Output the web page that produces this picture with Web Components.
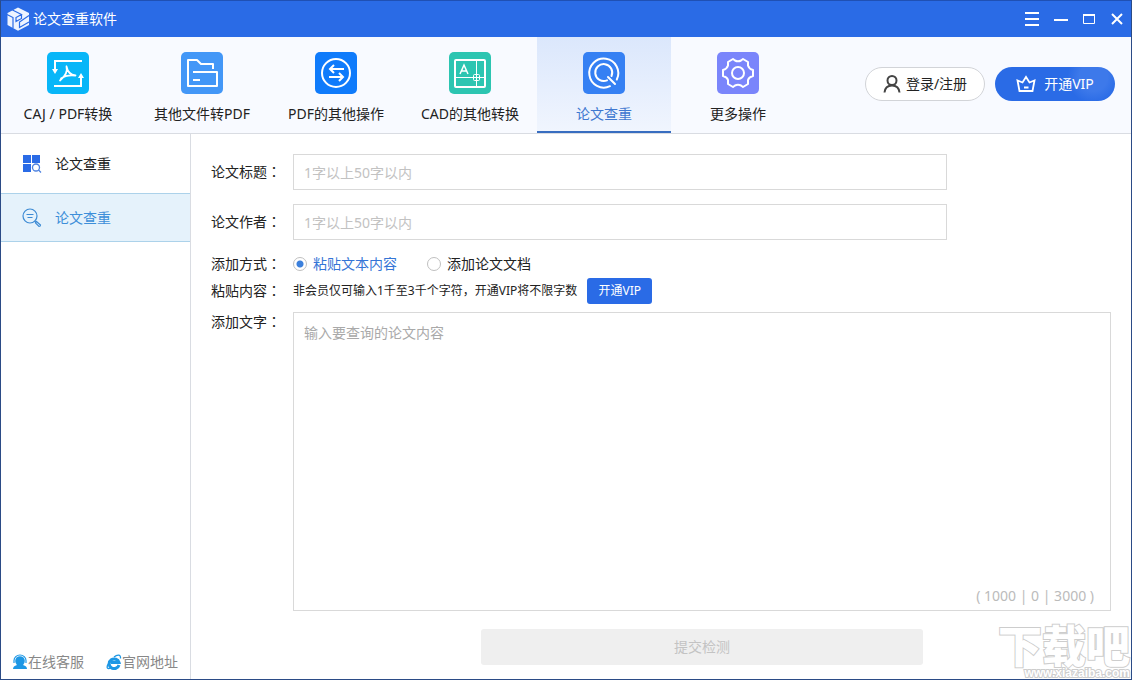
<!DOCTYPE html>
<html lang="zh-CN">
<head>
<meta charset="utf-8">
<title>论文查重软件</title>
<style>
  body { margin: 0; font: 14px/20px "Noto Sans", "Noto Sans CJK SC", sans-serif; color: #222; background: #fff; }
</style>
</head>
<body>
<app-window>
  <title-bar slot="title" caption="论文查重软件"></title-bar>
  <tool-bar slot="tools">
    <tool-tab icon="convert">CAJ / PDF转换</tool-tab>
    <tool-tab icon="folder">其他文件转PDF</tool-tab>
    <tool-tab icon="swap">PDF的其他操作</tool-tab>
    <tool-tab icon="cad">CAD的其他转换</tool-tab>
    <tool-tab icon="check" active>论文查重</tool-tab>
    <tool-tab icon="gear">更多操作</tool-tab>
    <pill-button slot="account" icon="user">登录/注册</pill-button>
    <pill-button slot="account" icon="crown" primary>开通VIP</pill-button>
  </tool-bar>
  <side-nav slot="side">
    <side-item icon="grid">论文查重</side-item>
    <side-item icon="search" active>论文查重</side-item>
    <side-link slot="foot" icon="service">在线客服</side-link>
    <side-link slot="foot" icon="globe">官网地址</side-link>
  </side-nav>
  <paper-form></paper-form>
  <site-mark slot="mark"></site-mark>
</app-window>

<script>
const ICONS = {
  logo: [24, 24, `<path d="M12 0.500L23 6v12L12 23.800 1.500 18V6z" fill="#edf4ff"/><path d="M1 7.500l6 3v10.500M6.500 3l9 4.500L10 10.500v4l5.500-3V7.500M23 8.500L13.500 15v5.500L23 15" fill="none" stroke="#2a6be6" stroke-width="1.200"/>`],
  convert: [42, 42, `<rect width="42" height="42" rx="5" fill="#08b6f8"/><g fill="none" stroke="#fff" stroke-width="2"><path d="M35 9H8v9M7 34h27V24"/></g><path d="M5 17h6l-3 5zM31 26h6l-3-5z" fill="#fff"/><path d="M19.500 14.500q2 7-6.500 14M19.500 14.500q1.500 8 9 9M14 26.500q5-4 14.500-3" fill="none" stroke="#fff" stroke-width="1.800" stroke-linecap="round"/>`],
  folder: [42, 42, `<rect width="42" height="42" rx="5" fill="#4397f7"/><path d="M32 17v-5H20l-4-4H7v26h29V20H12M12 28h7" fill="none" stroke="#fff" stroke-width="2" stroke-linejoin="round"/>`],
  swap: [42, 42, `<rect width="42" height="42" rx="5" fill="#0f7bfb"/><circle cx="21" cy="21" r="14" fill="none" stroke="#fff" stroke-width="2"/><path d="M29 17H15M19 13l-4 4 4 4M14 25h14M24 21l4 4-4 4" fill="none" stroke="#fff" stroke-width="2"/>`],
  cad: [42, 42, `<rect width="42" height="42" rx="5" fill="#2cc5b1"/><g fill="none" stroke="#fff"><rect x="6" y="8" width="30" height="27" rx="1" stroke-width="2"/><path d="M6 25.500h30M27.500 8v27"/><rect x="24.500" y="22.500" width="6" height="6" rx="1"/><path d="M11 22l4-9 4 9M12.500 19h5" stroke-width="1.500"/></g>`],
  check: [42, 42, `<rect width="42" height="42" rx="5" fill="#3580f3"/><g fill="none" stroke="#fff" stroke-width="2" stroke-linecap="round"><path d="M27 34.200A14.500 14.500 0 1 1 33.800 27.500"/><path d="M24 28.400A8.500 8.500 0 1 1 28.500 24M25 25l7 7"/></g>`],
  gear: [42, 42, `<rect width="42" height="42" rx="5" fill="#7a85fb"/><g fill="none" stroke="#fff" stroke-width="2" stroke-linejoin="round"><path d="M16 7l2 1.500q3 1.500 6 0L26 7l5 3v3.500q1 3.500 5 4.500v6q-4 1-5 4v4l-5 3-2-1.500q-3-1.500-6 0L16 35l-5-3v-4q-1-3-5-4v-6q4-1 5-4.500V10z"/><circle cx="21" cy="21" r="6"/></g>`],
  user: [18, 18, `<g fill="none" stroke="#444" stroke-width="2"><circle cx="9" cy="5.500" r="4.500"/><path d="M1.500 17.500C2 12.500 5 10.500 9 10.500s7 2 7.500 7"/></g>`],
  crown: [20, 18, `<path d="M3.500 16L1.500 5.500 6.500 7.500 10 2l3.500 5.500 5-2L16.500 16zM8 12.500h4.500" fill="none" stroke="#fff" stroke-width="1.800"/>`],
  grid: [20, 20, `<path d="M1 1h8v8H1zM10 1h8v8h-8zM1 10h8v8H1z" fill="#2a6be6"/><g fill="none" stroke="#4b80df" stroke-width="1.300"><circle cx="14" cy="13.500" r="3.500"/><path d="M16.500 16l2.500 2.500"/></g>`],
  search: [20, 20, `<g fill="none" stroke="#3d8bd4" stroke-width="1.200"><circle cx="8" cy="8" r="7"/><path d="M4.500 6.500h7M5.500 9.500h5M12.500 13l1.500 1.500M14.500 13.500l4 3.500q0 1.500-1.500 1.500l-3.500-3.500z"/></g>`],
  service: [16, 16, `<path d="M1 15q0-3 4-4h6q4 1 4 4z" fill="#1d97e5"/><circle cx="8" cy="7" r="4.800" fill="#1d97e5"/><path d="M2 9V6.500a6 5.500 0 0 1 12 0V9" fill="none" stroke="#1d97e5" stroke-width="1.200"/>`],
  globe: [16, 16, `<path d="M13 11A5 4.800 0 1 1 13 8.500H5" fill="none" stroke="#1d97e5" stroke-width="3"/><path d="M3 9C.5 12 .5 15 3 14.500c1 0 2-.5 3-1M8 3c3-2.500 7-3 6.500 1.500" fill="none" stroke="#1d97e5" stroke-width="1.300"/>`],
  menu: [16, 16, `<path d="M0 2h14M0 8h14M0 14h14" stroke="#fff" stroke-width="2"/>`],
  min: [16, 16, `<path d="M1 9h14" stroke="#fff" stroke-width="2"/>`],
  max: [16, 16, `<path d="M2.500 4v8.500h11V4" fill="none" stroke="#fff"/><path d="M2 4h12" stroke="#fff" stroke-width="2"/>`],
  close: [16, 16, `<path d="M3 3l10 10M13 3L3 13" stroke="#fff" stroke-width="2"/>`]
};
const icon = name => {
  const [w, h, body] = ICONS[name];
  return `<svg width="${w}" height="${h}" viewBox="0 0 ${w} ${h}" aria-hidden="true">${body}</svg>`;
};
const BASE = `*{box-sizing:border-box} svg{display:block;flex:none} button,input,textarea{font:inherit;color:inherit;margin:0}
  .colon{font-family:"Noto Sans CJK TC",sans-serif;line-height:1px}`;

function define(name, render) {
  customElements.define(name, class extends HTMLElement {
    connectedCallback() {
      if (this.shadowRoot) return;
      this.attachShadow({ mode: "open" });
      const { css, html } = render(this);
      this.shadowRoot.innerHTML = `<style>${BASE}${css}</style>${html}`;
    }
  });
}

define("app-window", () => ({
  css: `
    :host{display:flex;flex-direction:column;min-height:100vh;box-sizing:border-box;border:1px solid #2b4b86;border-top-color:#1f50b4;position:relative}
    .body{flex:1;display:flex}
    main{flex:1;display:flex;min-width:0}`,
  html: `<slot name="title"></slot><slot name="tools"></slot>
    <div class="body"><slot name="side"></slot><main><slot></slot></main></div><slot name="mark"></slot>`
}));

define("title-bar", el => ({
  css: `
    :host{display:flex;align-items:center;height:36px;background:#2a6be6;color:#fff;padding-left:5px}
    h1{font:inherit;margin:0 auto 0 3px}
    button{display:grid;place-items:center;width:28px;height:36px;padding:0;border:0;background:none}`,
  html: `${icon("logo")}<h1>${el.getAttribute("caption")}</h1>
    <button aria-label="菜单">${icon("menu")}</button><button aria-label="最小化">${icon("min")}</button>
    <button aria-label="最大化">${icon("max")}</button><button aria-label="关闭">${icon("close")}</button>`
}));

define("tool-bar", () => ({
  css: `
    :host{display:flex;background:#f8faff;border-bottom:1px solid #d9dce2}
    nav{display:flex}
    .account{display:flex;align-items:center;gap:10px;margin-left:auto;padding:0 16px 2px 0}`,
  html: `<nav><slot></slot></nav><div class="account"><slot name="account"></slot></div>`
}));

define("tool-tab", el => ({
  css: `
    :host{display:block;width:134px}
    button{display:flex;flex-direction:column;align-items:center;gap:10px;width:100%;height:96px;padding:15px 0 0;border:0;border-bottom:2px solid transparent;background:none;white-space:nowrap}
    :host([active]) button{background:linear-gradient(#dbe7fc,#f0f5fe);border-color:#386dc0;color:#3f78d0}`,
  html: `<button>${icon(el.getAttribute("icon"))}<slot></slot></button>`
}));

define("pill-button", el => ({
  css: `
    :host{display:block}
    button{display:flex;align-items:center;justify-content:center;gap:5px;width:120px;height:34px;padding:0;border:1px solid #d2d4d8;border-radius:17px;background:#fff;white-space:nowrap}
    :host([primary]) button{gap:8px;border:0;color:#fff;background:radial-gradient(circle at 82% 30%,#3d79ea 0 14px,#2a6be6 26px)}`,
  html: `<button>${icon(el.getAttribute("icon"))}<slot></slot></button>`
}));

define("side-nav", () => ({
  css: `
    :host{display:flex;flex-direction:column;width:190px;box-sizing:border-box;border-right:1px solid #d9dce2;flex:none}
    footer{display:flex;gap:22px;margin-top:auto;padding:0 10px 7px 11px}`,
  html: `<nav><slot></slot></nav><footer><slot name="foot"></slot></footer>`
}));

define("side-item", el => ({
  css: `
    :host{display:block}
    button{display:flex;align-items:center;gap:13px;width:100%;height:59px;padding:0 0 0 21px;border:0;background:none}
    :host([active]) button{height:49px;border:solid #acd2ea;border-width:1px 0;background:#e5f2fb;color:#3d8fd9}`,
  html: `<button>${icon(el.getAttribute("icon"))}<slot></slot></button>`
}));

define("side-link", el => ({
  css: `
    :host{display:block}
    a{display:flex;align-items:center;color:#888;text-decoration:none;white-space:nowrap}`,
  html: `<a href="#">${icon(el.getAttribute("icon"))}<slot></slot></a>`
}));

const caption = text => `${text}<span class="colon" lang="zh-Hant">：</span>`;

define("text-field", el => ({
  css: `
    :host{display:flex;align-items:center}
    label{width:82px;flex:none}
    .box{flex:1}
    input{display:block;width:80%;height:36px;padding:0 10px;border:1px solid #d9d9d9;outline:0;background:#fff}
    input::placeholder{color:#c2c2c2}`,
  html: `<label for="field">${caption(el.getAttribute("label"))}</label>
    <div class="box"><input id="field" type="text" placeholder="${el.getAttribute("placeholder")}"></div>`
}));

define("mode-choice", () => ({
  css: `
    :host{display:flex;align-items:center}
    .name{width:82px;flex:none}
    .set{display:flex;gap:30px}
    label{display:flex;align-items:center;gap:6px}
    input{appearance:none;width:14px;height:14px;border:1px solid #c0c0c0;border-radius:50%;background:#fff}
    input:checked{background:radial-gradient(circle,#3c80dc 0 3px,#fff 4px)}
    label:has(:checked){color:#3575d6}`,
  html: `<span class="name" id="name">${caption("添加方式")}</span>
    <div class="set" role="radiogroup" aria-labelledby="name">
      <label><input type="radio" name="mode" checked>粘贴文本内容</label>
      <label><input type="radio" name="mode">添加论文文档</label>
    </div>`
}));

define("paper-form", () => ({
  css: `
    :host{flex:1;display:flex;min-width:0}
    form{flex:1;display:flex;flex-direction:column;padding:20px 20px 14px;min-width:0}
    text-field{margin-bottom:14px}
    mode-choice{margin-bottom:4px}
    .name{width:82px;flex:none}
    .note{display:flex;align-items:center;margin-bottom:8px}
    .note p{margin:0 10px 0 0;font-size:12px}
    .vip{width:65px;height:26px;padding:0;border:0;border-radius:3px;background:#2a6be6;color:#fff;font-size:12px}
    .content{flex:1;display:flex}
    .area{flex:1;display:flex;position:relative}
    textarea{flex:1;min-height:200px;padding:10px;border:1px solid #d9d9d9;outline:0;resize:none;background:#fff}
    textarea::placeholder{color:#a9a9a9}
    output{position:absolute;right:17px;bottom:5px;color:#bbb}
    .foot{display:grid;padding-left:82px}
    .send{justify-self:center;width:54%;height:36px;margin-top:18px;padding:0;border:0;border-radius:3px;background:#efefef;color:#c3c3c3}`,
  html: `<form>
      <text-field label="论文标题" placeholder="1字以上50字以内"></text-field>
      <text-field label="论文作者" placeholder="1字以上50字以内"></text-field>
      <mode-choice></mode-choice>
      <div class="note"><span class="name">${caption("粘贴内容")}</span><p>非会员仅可输入1千至3千个字符，开通VIP将不限字数</p><button class="vip" type="button">开通VIP</button></div>
      <div class="content"><label class="name" for="text">${caption("添加文字")}</label>
        <div class="area"><textarea id="text" placeholder="输入要查询的论文内容"></textarea><output for="text">( 1000 | 0 | 3000 )</output></div></div>
      <div class="foot"><button class="send" type="button" disabled>提交检测</button></div>
    </form>`
}));

define("site-mark", () => ({
  css: `
    :host{position:absolute;right:1px;bottom:0;pointer-events:none;color:#fff;-webkit-text-stroke:2px #cdcdcd;paint-order:stroke fill}
    .name{display:block;font:900 44px/46px "Noto Sans CJK SC",sans-serif;white-space:nowrap}
    .url{display:block;text-align:right;font:bold 12px/12px "Liberation Sans",sans-serif}`,
  html: `<span class="name">下载吧</span><span class="url">www.xiazaiba.com</span>`
}));
</script>
</body>
</html>
